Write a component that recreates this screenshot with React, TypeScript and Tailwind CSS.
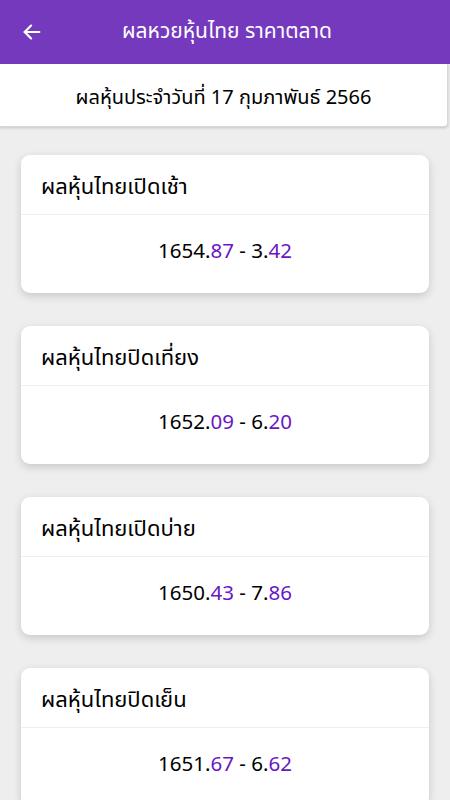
import React from 'react'

const results = [
  { title: 'ผลหุ้นไทยเปิดเช้า', a: '1654', ad: '87', b: '3', bd: '42' },
  { title: 'ผลหุ้นไทยปิดเที่ยง', a: '1652', ad: '09', b: '6', bd: '20' },
  { title: 'ผลหุ้นไทยเปิดบ่าย', a: '1650', ad: '43', b: '7', bd: '86' },
  { title: 'ผลหุ้นไทยปิดเย็น', a: '1651', ad: '67', b: '6', bd: '62' },
]

export default function App() {
  return (
    <div
      className="w-[450px] h-[800px] overflow-hidden bg-[#eeeeee]"
      style={{ fontFamily: '"Noto Sans Thai", "Noto Sans", "DejaVu Sans", sans-serif' }}
    >
      {/* Toolbar */}
      <div className="h-16 bg-[#7539be] flex items-center relative">
        <button className="w-16 h-16 flex items-center justify-center">
          <svg width="22" height="22" viewBox="0 0 24 24" fill="none" stroke="white" strokeWidth="2.4" strokeLinecap="round" strokeLinejoin="round">
            <path d="M20 12H4" />
            <path d="M11 5l-7 7 7 7" />
          </svg>
        </button>
        <div className="absolute left-0 right-0 pl-[4px] text-center text-white text-[21px] pointer-events-none">
          ผลหวยหุ้นไทย ราคาตลาด
        </div>
      </div>

      {/* Date bar */}
      <div className="h-[63px] mr-[2px] pt-[5px] bg-white rounded-br-[4px] border-b border-r border-[#d8d8d8] shadow-[0_1px_3px_rgba(0,0,0,0.18)] flex items-center justify-center text-[20px] text-black">
        ผลหุ้นประจำวันที่ 17 กุมภาพันธ์ 2566
      </div>

      {/* Cards */}
      <div className="px-[21px] pt-[28px] flex flex-col gap-[33px]">
        {results.map((r, idx) => (
          <div key={idx} className="bg-white rounded-[9px] shadow-[0_3px_8px_rgba(0,0,0,0.16)]">
            <div className="h-[60px] flex items-center px-5 pt-[6px] text-[22px] text-black border-b border-[#efefef]">
              {r.title}
            </div>
            <div className="h-[78px] flex items-center justify-center pb-[4px] text-[20.5px] text-black">
              <span>
                {r.a}.<span className="text-[#6b16c4]">{r.ad}</span> - {r.b}.<span className="text-[#6b16c4]">{r.bd}</span>
              </span>
            </div>
          </div>
        ))}
      </div>
    </div>
  )
}
